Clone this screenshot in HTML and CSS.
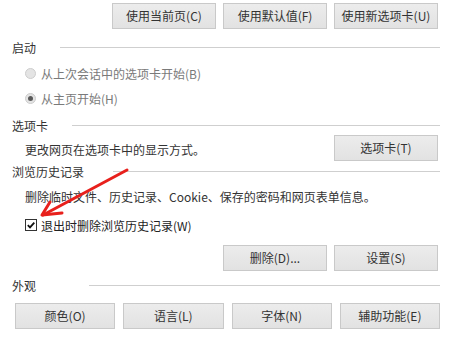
FILE: index.html
```html
<!DOCTYPE html>
<html lang="zh-CN">
<head>
    <meta charset="UTF-8">
    <title>Internet 选项</title>
    <link rel="stylesheet" href="styles.css">
</head>
<body>
    <div class="panel">
        <div class="btn-row">
            <button class="btn">使用当前页(C)</button>
            <button class="btn">使用默认值(F)</button>
            <button class="btn">使用新选项卡(U)</button>
        </div>

        <div class="group-title startup"><span class="label">启动</span><span class="rule"></span></div>
        <label class="option radio-row first disabled"><span class="radio"></span>从上次会话中的选项卡开始(B)</label>
        <label class="option radio-row disabled"><span class="radio checked"></span>从主页开始(H)</label>

        <div class="group-title tabs"><span class="label">选项卡</span><span class="rule"></span></div>
        <div class="desc-row">
            <span class="desc">更改网页在选项卡中的显示方式。</span>
            <button class="btn">选项卡(T)</button>
        </div>

        <div class="group-title history"><span class="label">浏览历史记录</span><span class="rule"></span></div>
        <p class="desc desc-line">删除临时文件、历史记录、Cookie、保存的密码和网页表单信息。</p>
        <label class="option check-row"><span class="checkbox">
            <svg viewBox="0 0 10 10"><path d="M1.8 5.2 L4 7.4 L8.3 2.6" /></svg>
        </span>退出时删除浏览历史记录(W)</label>
        <div class="btn-row mid">
            <button class="btn">删除(D)...</button>
            <button class="btn">设置(S)</button>
        </div>

        <div class="group-title looks"><span class="label">外观</span><span class="rule"></span></div>
        <div class="btn-row bottom">
            <button class="btn">颜色(O)</button>
            <button class="btn">语言(L)</button>
            <button class="btn">字体(N)</button>
            <button class="btn">辅助功能(E)</button>
        </div>
    </div>

    <!-- red annotation arrow drawn over the dialog -->
    <svg class="arrow" viewBox="0 0 460 343">
        <path d="M127 170 L43 215" />
        <path d="M50 202 L42 215 L62 213" />
    </svg>
</body>
</html>
```

FILE: styles.css
```css
body {
    margin: 0;
    background: #fff;
    font-family: "Noto Sans CJK SC", "Noto Sans", sans-serif;
    font-size: 12px;
    color: #333;
}
.panel {
    width: 460px;
    height: 343px;
    box-sizing: border-box;
    padding: 3px 22px 0 12px;
}
.btn-row {
    display: flex;
    justify-content: flex-end;
    gap: 7px;
    height: 26px;
}
.btn {
    width: 104px;
    height: 26px;
    padding: 0;
    border: 1px solid #c9c9c9;
    background: linear-gradient(#ececec, #e2e2e2);
    font-family: inherit;
    font-size: 12px;
    color: #333;
    line-height: 24px;
}
.btn-row.mid {
    margin-top: 12px;
}
.btn-row.bottom {
    justify-content: space-between;
    gap: 8px;
    margin: 10px -2px 0 3px;
}
.btn-row.bottom .btn {
    flex: 1;
}
.group-title {
    display: flex;
    align-items: center;
    height: 16px;
}
.group-title .rule {
    flex: 1;
    height: 1px;
    background: #cfcfcf;
    margin-right: -2px;
}
.startup { margin-top: 10px; }
.startup .label { width: 48px; }
.tabs { margin-top: 11px; }
.tabs .label { width: 60px; }
.history { margin-top: 2px; }
.history .label { width: 101px; }
.looks { margin-top: 6px; }
.looks .label { width: 77px; }

.option {
    display: flex;
    align-items: center;
    height: 16px;
    padding-left: 13px;
}
.radio-row.first { margin-top: 10px; }
.radio-row { margin-top: 9px; }
.disabled { color: #7a7a7a; }
.radio {
    width: 9px;
    height: 9px;
    border: 1px solid #cdcdcd;
    border-radius: 50%;
    background: #e4e4e4;
    margin-right: 5px;
    display: flex;
    justify-content: center;
    align-items: center;
}
.radio.checked::after {
    content: "";
    width: 5px;
    height: 5px;
    border-radius: 50%;
    background: #5a5a5a;
}
.desc-row {
    display: flex;
    justify-content: space-between;
    align-items: center;
    height: 26px;
    margin-top: 2px;
    padding-left: 13px;
}
.desc-row .desc {
    padding-top: 2px;
}
.desc-line {
    margin: 10px 0 0;
    height: 16px;
    line-height: 16px;
    padding-left: 13px;
}
.check-row {
    margin-top: 12px;
    color: #222;
}
.checkbox {
    width: 10px;
    height: 10px;
    border: 1px solid #333;
    background: #fff;
    margin-right: 4px;
    display: flex;
}
.checkbox svg {
    width: 10px;
    height: 10px;
    fill: none;
    stroke: #111;
    stroke-width: 1.8;
}
.arrow {
    position: absolute;
    top: 0;
    left: 0;
    width: 460px;
    height: 343px;
    pointer-events: none;
    fill: none;
    stroke: #e8201c;
    stroke-width: 3;
    stroke-linecap: round;
    stroke-linejoin: round;
}
```
